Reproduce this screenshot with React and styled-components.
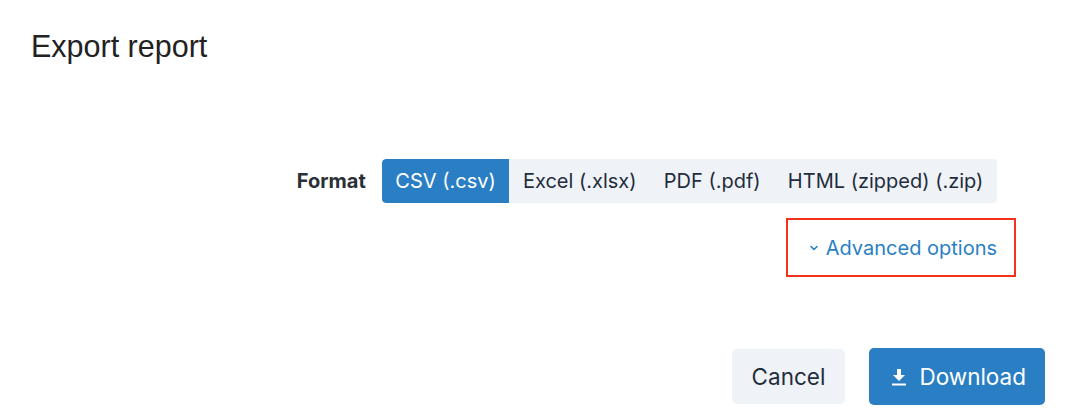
import React, { useState } from "react";
import styled, { createGlobalStyle } from "styled-components";

const GlobalStyle = createGlobalStyle`
  body {
    margin: 0;
    background: #ffffff;
    font-family: Inter, "Noto Sans", sans-serif;
  }
`;

const formats = ["CSV (.csv)", "Excel (.xlsx)", "PDF (.pdf)", "HTML (zipped) (.zip)"];

const App = () => {
  const [format, setFormat] = useState(formats[0]);
  return (
    <>
      <GlobalStyle />
      <Modal>
        <Title>Export report</Title>
        <Body>
          <FormRow>
            <Label>Format</Label>
            <Segments>
              {formats.map((f) => (
                <Segment key={f} $active={f === format} onClick={() => setFormat(f)}>
                  {f}
                </Segment>
              ))}
            </Segments>
          </FormRow>
          <Highlight>
            <AdvancedLink href="#">
              <svg width="10" height="10" viewBox="0 0 10 10">
                <path d="M2 3.5 L5 6.5 L8 3.5" fill="none" stroke="currentColor" strokeWidth="1.6" strokeLinecap="round" strokeLinejoin="round" />
              </svg>
              Advanced options
            </AdvancedLink>
          </Highlight>
        </Body>
        <Footer>
          <Button>Cancel</Button>
          <Button $primary>
            <svg width="16" height="18" viewBox="0 0 16 18">
              <path d="M6 1 h4 v6 h4 l-6 6 l-6 -6 h4 z" fill="currentColor" />
              <rect x="1" y="15.5" width="14" height="2" fill="currentColor" />
            </svg>
            Download
          </Button>
        </Footer>
      </Modal>
    </>
  );
};

const Modal = styled.div`
  width: 1066px;
  height: 414px;
  box-sizing: border-box;
  padding: 28px 21px 0 31px;
  display: flex;
  flex-direction: column;
`;

const Title = styled.h2`
  margin: 0;
  font-family: "Liberation Sans", Arial, sans-serif;
  font-weight: 400;
  font-size: 30.5px;
  line-height: 37px;
  color: #222222;
`;

const Body = styled.div`
  display: flex;
  flex-direction: column;
  align-items: flex-end;
  padding-right: 48px;
  margin-top: 94px;
`;

const FormRow = styled.div`
  display: flex;
  align-items: center;
  gap: 16px;
`;

const Label = styled.span`
  font-size: 20px;
  font-weight: 700;
  color: #2b2f36;
`;

const Segments = styled.div`
  display: flex;
  background: #eff3f8;
  border-radius: 4px;
  height: 44px;
  overflow: hidden;
`;

const Segment = styled.button`
  border: none;
  font-family: inherit;
  font-size: 20px;
  padding: 0 13.6px;
  cursor: pointer;
  background: ${(p) => (p.$active ? "#2a7fc4" : "transparent")};
  color: ${(p) => (p.$active ? "#ffffff" : "#1f2d3d")};
  border-radius: ${(p) => (p.$active ? "4px 0 0 4px" : "0")};
`;

const Highlight = styled.div`
  margin-top: 15px;
  margin-right: -19px;
  width: 230px;
  height: 59px;
  box-sizing: border-box;
  border: 2px solid #f2321b;
  display: flex;
  align-items: center;
  justify-content: flex-end;
  padding-right: 17px;
`;

const AdvancedLink = styled.a`
  display: flex;
  align-items: center;
  gap: 7px;
  font-size: 20px;
  color: #2a7fc4;
  text-decoration: none;
`;

const Footer = styled.div`
  display: flex;
  justify-content: flex-end;
  gap: 24px;
  margin-top: 71px;
`;

const Button = styled.button`
  display: flex;
  align-items: center;
  gap: 12px;
  height: ${(p) => (p.$primary ? "57px" : "55px")};
  margin-top: ${(p) => (p.$primary ? "0" : "1px")};
  padding: 0 ${(p) => (p.$primary ? "19px 0 22px" : "20px")};
  border: none;
  border-radius: 5px;
  font-family: inherit;
  font-size: 22.5px;
  cursor: pointer;
  background: ${(p) => (p.$primary ? "#2a7fc4" : "#eff3f8")};
  color: ${(p) => (p.$primary ? "#ffffff" : "#1f2d3d")};
`;

export default App;
